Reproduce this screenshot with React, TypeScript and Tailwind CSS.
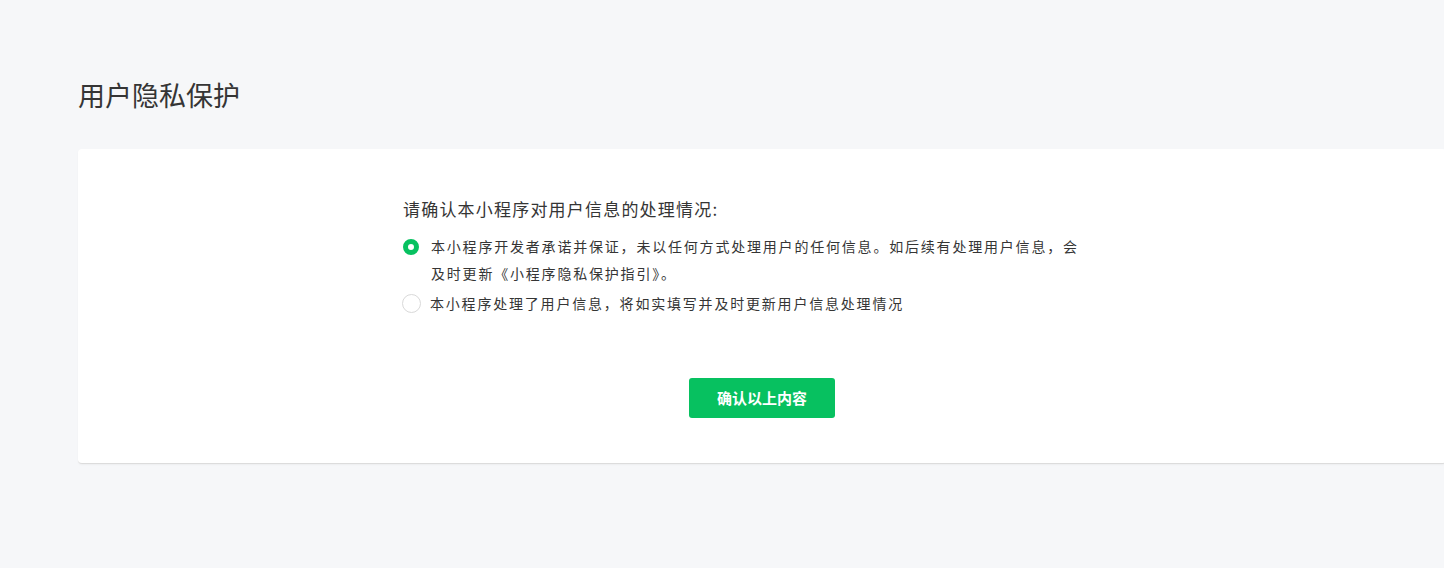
import React from "react";

export default function App() {
  return (
    <div
      className="w-full h-[568px] overflow-hidden bg-[#f6f7f9] text-[#353535]"
      style={{ fontFamily: '"Noto Sans CJK SC", "Noto Sans", sans-serif' }}
    >
      <div className="pl-[78px] pt-[76px]">
        <h1 className="text-[27px] leading-[38px] font-normal text-[#353535]">用户隐私保护</h1>
        <div className="mt-[35px] w-[1368px] h-[315px] bg-white rounded-[4px] border-b border-[#dcdcdc] shadow-[0_1px_2px_rgba(0,0,0,0.04)] flex flex-col items-center pt-[48px]">
          <div className="w-[718px]">
            <div className="text-[17px] leading-[24px] tracking-[1.2px]">请确认本小程序对用户信息的处理情况:</div>
            <div className="mt-[12px] flex text-[14px] leading-[27px]">
              <div className="w-[28px] shrink-0 pt-[6px]">
                <div className="w-[16px] h-[16px] rounded-full border-[5px] border-[#07c160] bg-white" />
              </div>
              <div className="w-[652px] tracking-[1.8px]">
                本小程序开发者承诺并保证，未以任何方式处理用户的任何信息。如后续有处理用户信息，会及时更新《小程序隐私保护指引》。
              </div>
            </div>
            <div className="mt-[3px] flex text-[14px] leading-[27px]">
              <div className="w-[28px] shrink-0 pt-[4px] -ml-[1px]">
                <div className="w-[19px] h-[19px] rounded-full border border-[#d9d9d9] bg-white" />
              </div>
              <div className="tracking-[1.8px]">本小程序处理了用户信息，将如实填写并及时更新用户信息处理情况</div>
            </div>
          </div>
          <button className="mt-[61px] w-[146px] h-[40px] rounded-[3px] bg-[#07c160] text-white text-[15px] font-bold">
            确认以上内容
          </button>
        </div>
      </div>
    </div>
  );
}
